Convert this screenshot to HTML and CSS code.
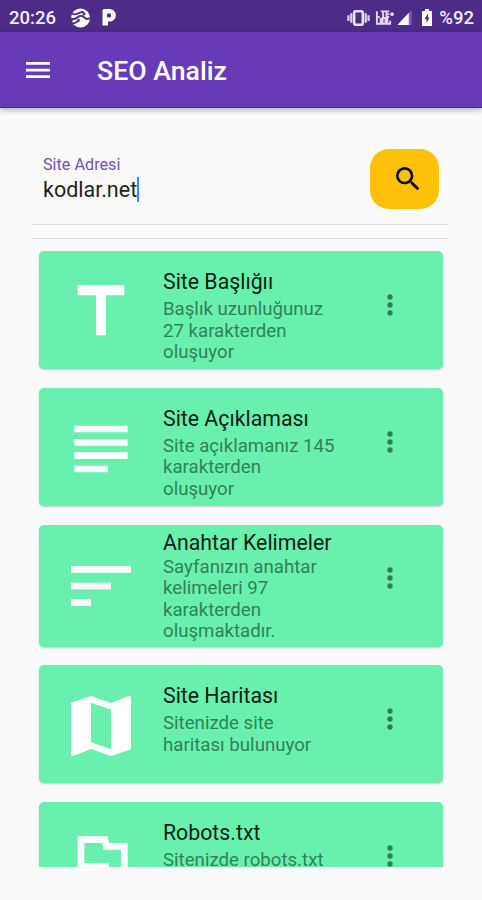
FILE: index.html
```html
<!DOCTYPE html>
<html lang="tr">
<head>
  <meta charset="UTF-8">
  <title>SEO Analiz</title>
  <link rel="stylesheet" href="styles.css">
</head>
<body>
  <div class="status-bar">
    <span class="clock">20:26</span>
    <svg class="status-ball" viewBox="0 0 20 20">
      <circle cx="10.5" cy="10" r="9.5" fill="#fff"/>
      <path d="M0 3C2 7 5 7 8 5.500s5-2.500 6 0M0 10c4 2 6 1 8-1s5-1 7 1 3 1 5 0M0 15.500c4 1 6-1 8-2.500" fill="none" stroke="#4d2c88" stroke-width="1.900"/>
      <path d="M0 0h4L2 4.500H0zM0 11l3 .5L2 15.500H0z" fill="#4d2c88"/>
      <circle cx="14" cy="6" r="1.500" fill="#4d2c88"/>
      <circle cx="8.500" cy="12.500" r="1.400" fill="#4d2c88"/>
    </svg>
    <svg class="status-p" viewBox="0 0 15 17">
      <path fill="#fff" fill-rule="evenodd" d="M.5 16.500V1.500Q.5 0 2 0h5.500a6.300 6.300 0 0 1 0 12.600H6v3.900zM7 4.200a2.200 2.200 0 1 0 0 4.400 2.200 2.200 0 0 0 0-4.400z"/>
    </svg>
    <div class="status-right">
      <svg class="status-vibrate" viewBox="0 0 24 18">
        <path d="M1.500 6v6M4.500 4v10M19.500 4v10M22.500 6v6" stroke="#d8cdeb" stroke-width="2.400" fill="none"/>
        <rect x="7.500" y="2" width="9" height="14" rx="1.500" fill="none" stroke="#e9e1f5" stroke-width="2.600"/>
      </svg>
      <svg class="status-lte" viewBox="0 0 20 18">
        <path d="M2 2v6h3M6 2h5M8.500 2v7M15 2h-3v6h3M12 5h3M16 5h4M18 3v4M2 9v6h4V9M8 15h3V9H8zM13 9v6h3v-3" fill="none" stroke="#e0d7ef" stroke-width="2"/>
      </svg>
      <svg class="status-signal" viewBox="0 0 15 16">
        <path d="M15 0v16H0z" fill="#7e62ad"/>
        <path d="M12 3v13H0z" fill="#fff"/>
      </svg>
      <svg class="status-battery" viewBox="0 0 10 17">
        <path d="M3 0h4v2h3v15H0V2h3z" fill="#fff"/>
        <path d="M6 4.500L2.500 10H4.500v4L7.500 8.500H6z" fill="#4d2c88"/>
      </svg>
      <span>%92</span>
    </div>
  </div>

  <header class="app-bar">
    <svg class="menu-icon" viewBox="0 0 32 32">
      <path d="M4 8h24v2.700H4zM4 14.700h24v2.700H4zM4 21.300h24V24H4z" fill="#fff"/>
    </svg>
    <h1>SEO Analiz</h1>
  </header>

  <div class="search">
    <div class="field">
      <label class="field-label">Site Adresi</label>
      <div class="field-value"><span>kodlar.net</span><i class="caret"></i></div>
    </div>
    <button class="search-button">
      <svg viewBox="0 0 24 24"><path d="M15.500 14h-.79l-.28-.27A6.471 6.471 0 0 0 16 9.500 6.500 6.500 0 1 0 9.500 16c1.610 0 3.090-.59 4.230-1.570l.27.28v.79l5 4.990L20.490 19l-4.990-5zm-6 0C7.010 14 5 11.990 5 9.500S7.010 5 9.500 5 14 7.010 14 9.500 11.990 14 9.500 14z"/></svg>
    </button>
  </div>
  <div class="divider"></div>

  <main class="card-list">
    <div class="card">
      <svg class="card-icon" viewBox="0 0 24 24"><path d="M5 4v3h5.500v12h3V7H19V4z"/></svg>
      <div class="card-text">
        <h2>Site Başlığıı</h2>
        <p>Başlık uzunluğunuz<br>27 karakterden<br>oluşuyor</p>
      </div>
      <svg class="more-icon" viewBox="0 0 24 24"><circle cx="12" cy="6" r="2"/><circle cx="12" cy="12" r="2"/><circle cx="12" cy="18" r="2"/></svg>
    </div>
    <div class="card">
      <svg class="card-icon" viewBox="0 0 24 24"><path d="M14 17H4v2h10v-2zm6-8H4v2h16V9zM4 15h16v-2H4v2zM4 5v2h16V5H4z"/></svg>
      <div class="card-text">
        <h2>Site Açıklaması</h2>
        <p>Site açıklamanız 145<br>karakterden<br>oluşuyor</p>
      </div>
      <svg class="more-icon" viewBox="0 0 24 24"><circle cx="12" cy="6" r="2"/><circle cx="12" cy="12" r="2"/><circle cx="12" cy="18" r="2"/></svg>
    </div>
    <div class="card card-tall">
      <svg class="card-icon" viewBox="0 0 24 24"><path d="M3 18h6v-2H3v2zM3 6v2h18V6H3zm0 7h12v-2H3v2z"/></svg>
      <div class="card-text">
        <h2>Anahtar Kelimeler</h2>
        <p>Sayfanızın anahtar<br>kelimeleri 97<br>karakterden<br>oluşmaktadır.</p>
      </div>
      <svg class="more-icon" viewBox="0 0 24 24"><circle cx="12" cy="6" r="2"/><circle cx="12" cy="12" r="2"/><circle cx="12" cy="18" r="2"/></svg>
    </div>
    <div class="card">
      <svg class="card-icon" viewBox="0 0 24 24"><path d="M20.500 3l-.16.03L15 5.100 9 3 3.360 4.900c-.21.07-.36.25-.36.48V20.500c0 .28.22.5.5.5l.16-.03L9 18.900l6 2.100 5.640-1.900c.21-.07.36-.25.36-.48V3.500c0-.28-.22-.5-.5-.5zM15 19l-6-2.110V5l6 2.110V19z"/></svg>
      <div class="card-text">
        <h2>Site Haritası</h2>
        <p>Sitenizde site<br>haritası bulunuyor</p>
      </div>
      <svg class="more-icon" viewBox="0 0 24 24"><circle cx="12" cy="6" r="2"/><circle cx="12" cy="12" r="2"/><circle cx="12" cy="18" r="2"/></svg>
    </div>
    <div class="card">
      <svg class="card-icon" viewBox="0 0 24 24"><path d="M12.360 6l.4 2H18v6h-3.360l-.4-2H7V6h5.360M14 4H5v17h2v-7h5.600l.4 2h7V6h-5.600L14 4z"/></svg>
      <div class="card-text">
        <h2>Robots.txt</h2>
        <p>Sitenizde robots.txt</p>
      </div>
      <svg class="more-icon" viewBox="0 0 24 24"><circle cx="12" cy="6" r="2"/><circle cx="12" cy="12" r="2"/><circle cx="12" cy="18" r="2"/></svg>
    </div>
  </main>
</body>
</html>
```
FILE: styles.css
```css
* {
  box-sizing: border-box;
}
body {
  margin: 0;
  height: 900px;
  overflow: hidden;
  background-color: #fafafa;
  font-family: Roboto, sans-serif;
}
svg {
  display: block;
  flex-shrink: 0;
}
.status-bar {
  display: flex;
  align-items: center;
  height: 32px;
  padding: 3px 8px 0 9px;
  background-color: #4d2c88;
  color: #f3eefb;
  font-size: 18.5px;
  font-weight: 500;
}
.clock {
  width: 61px;
}
.status-ball {
  width: 20px;
  height: 20px;
}
.status-p {
  width: 15px;
  height: 17px;
  margin-left: 12px;
}
.status-right {
  display: flex;
  align-items: center;
  margin-left: auto;
}
.status-vibrate {
  width: 23px;
  height: 18px;
}
.status-lte {
  width: 19px;
  height: 18px;
  margin-left: 5px;
}
.status-signal {
  width: 15px;
  height: 15px;
  margin-left: 3px;
}
.status-battery {
  width: 10px;
  height: 17px;
  margin: 0 7px 0 10px;
}
.app-bar {
  display: flex;
  align-items: center;
  height: 76px;
  padding: 0 22px;
  background-color: #673ab7;
  border-bottom: 1px solid #512096;
  box-shadow: 0 2px 6px rgba(0,0,0,0.3);
}
.menu-icon {
  width: 32px;
  height: 32px;
  margin-top: 1px;
}
.app-bar h1 {
  margin: 2px 0 0 43px;
  color: #fff;
  font-size: 26.7px;
  font-weight: 500;
}
.search {
  display: flex;
  justify-content: space-between;
  height: 117px;
  margin: 0 33px;
  padding: 41px 10px 0;
  border-bottom: 1px solid #dcdcdc;
}
.field-label {
  display: block;
  margin-top: 6px;
  color: #7450b0;
  font-size: 16.2px;
  line-height: 20px;
}
.field-value {
  display: flex;
  margin-top: 1px;
  color: #222;
  font-size: 21.5px;
  line-height: 27px;
}
.caret {
  width: 2px;
  height: 25px;
  margin-top: 1px;
  background-color: #4285f4;
}
.search-button {
  width: 69px;
  height: 60px;
  padding: 0 0 0 22px;
  border: 0;
  border-radius: 19px;
  background-color: #ffc107;
}
.search-button svg {
  width: 32px;
  height: 32px;
}
.divider {
  height: 14px;
  margin: 0 33px;
  border-bottom: 1px solid #dcdcdc;
}
.card-list {
  height: 628px;
  padding: 12.4px 39px 0;
  overflow: hidden;
}
.card {
  display: flex;
  align-items: flex-start;
  height: 118px;
  margin-bottom: 18.7px;
  padding-left: 22px;
  border-radius: 5px;
  background-color: #69f0ae;
  box-shadow: 0 1px 2px rgba(0,0,0,0.2);
}
.card-icon {
  width: 80px;
  height: 80px;
  margin-top: 21px;
  fill: #fff;
}
.card-text {
  width: 186px;
  margin: 16.6px 0 0 22px;
  white-space: nowrap;
}
.card-text h2 {
  margin: 0;
  color: #0b1f15;
  font-size: 21.3px;
  font-weight: 400;
  line-height: 28px;
}
.card-text p {
  margin: 3.1px 0 0;
  color: #30835a;
  font-size: 18.65px;
  line-height: 21.5px;
}
.card-tall {
  height: 122px;
}
.card-tall .card-text {
  margin-top: 4px;
}
.card-tall .card-text p {
  margin-top: 0;
}
.more-icon {
  width: 32px;
  height: 32px;
  margin: 37.5px 0 0 25px;
  fill: #2f8059;
}
```
